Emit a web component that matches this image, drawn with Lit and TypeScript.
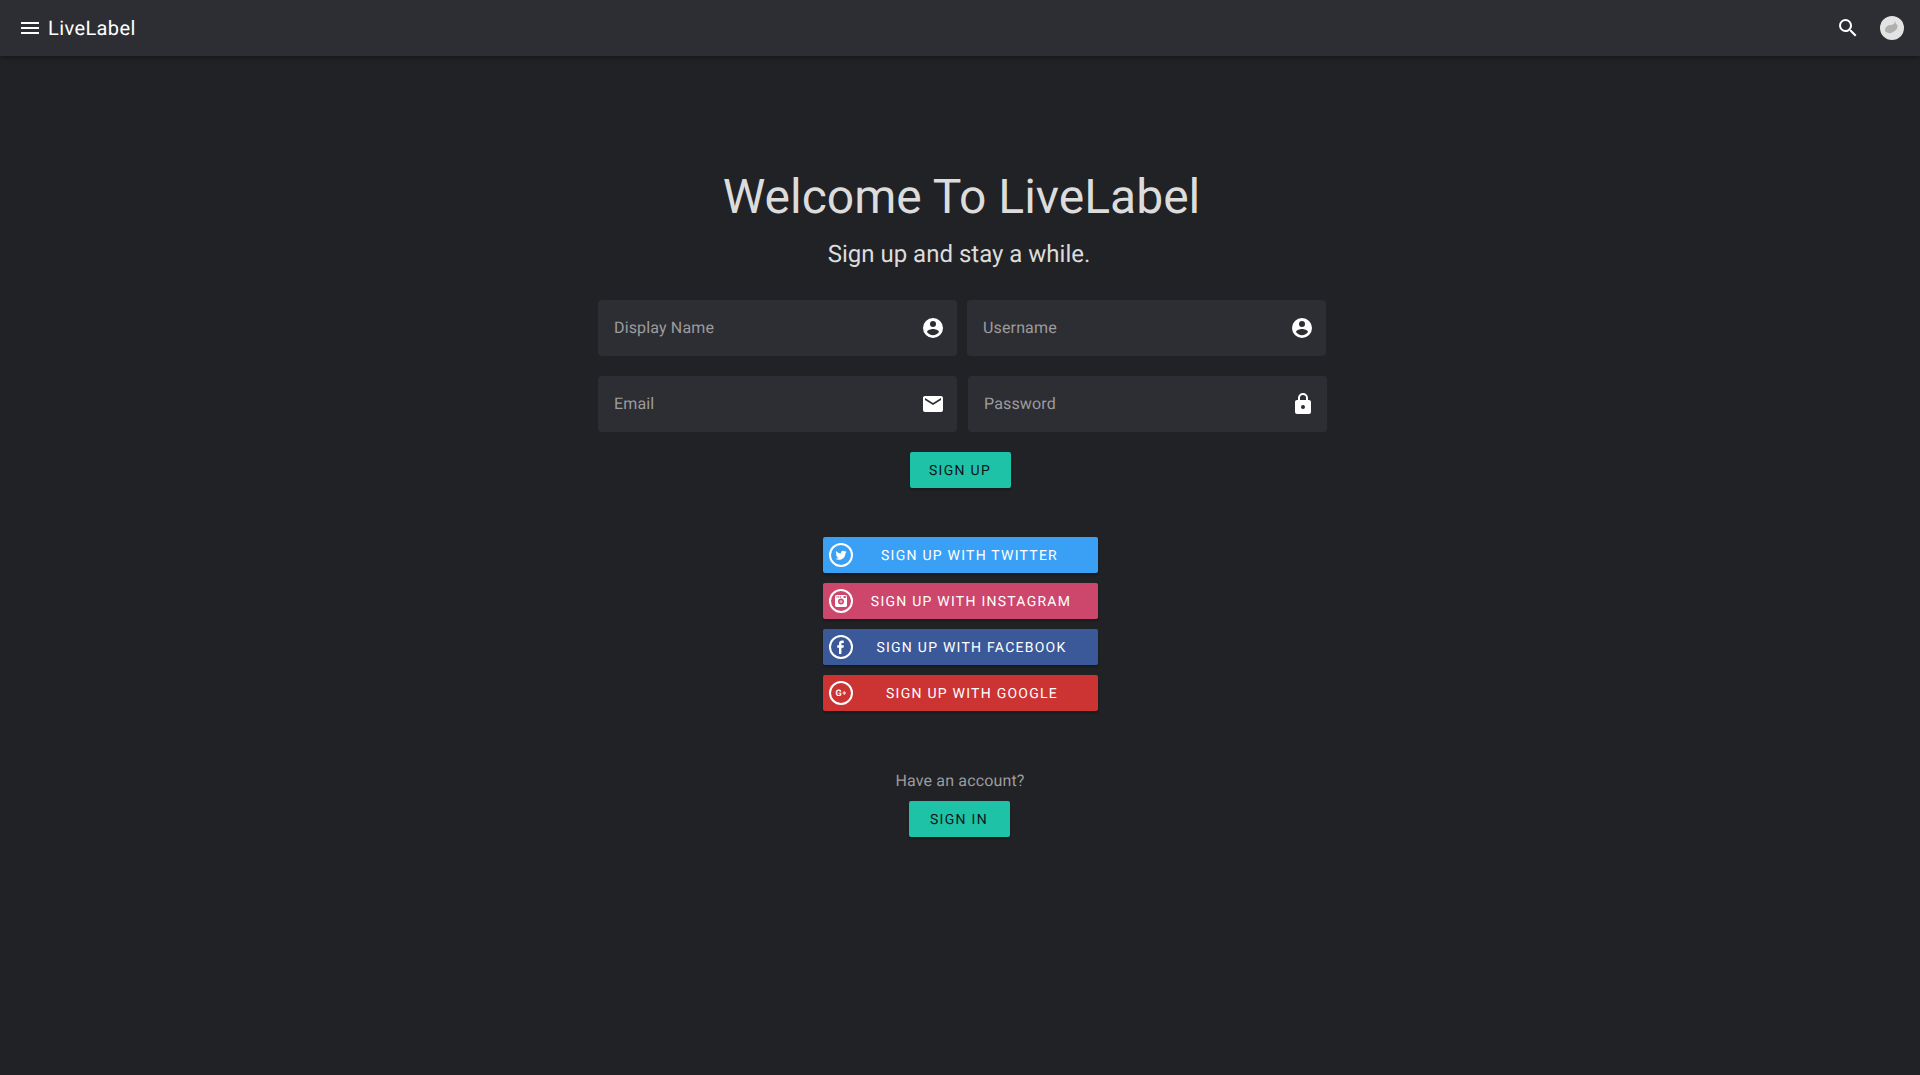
import { LitElement, css, html, svg } from "lit";
import { customElement } from "lit/decorators.js";

const ICONS = {
  menu: "M3,6H21V8H3V6M3,11H21V13H3V11M3,16H21V18H3V16Z",
  search:
    "M9.5,3A6.5,6.5 0 0,1 16,9.5C16,11.11 15.41,12.59 14.44,13.73L14.71,14H15.5L20.5,19L19,20.5L14,15.5V14.71L13.73,14.44C12.59,15.41 11.11,16 9.5,16A6.5,6.5 0 0,1 3,9.5A6.5,6.5 0 0,1 9.5,3M9.5,5C7,5 5,7 5,9.5C5,12 7,14 9.5,14C12,14 14,12 14,9.5C14,7 12,5 9.5,5Z",
  account:
    "M12,19.2C9.5,19.2 7.29,17.92 6,16C6.03,14 10,12.9 12,12.9C14,12.9 17.97,14 18,16C16.71,17.92 14.5,19.2 12,19.2M12,5A3,3 0 0,1 15,8A3,3 0 0,1 12,11A3,3 0 0,1 9,8A3,3 0 0,1 12,5M12,2A10,10 0 0,0 2,12A10,10 0 0,0 12,22A10,10 0 0,0 22,12A10,10 0 0,0 12,2Z",
  email:
    "M20,8L12,13L4,8V6L12,11L20,6M20,4H4C2.89,4 2,4.89 2,6V18A2,2 0 0,0 4,20H20A2,2 0 0,0 22,18V6C22,4.89 21.1,4 20,4Z",
  lock:
    "M12,17A2,2 0 0,0 14,15C14,13.89 13.1,13 12,13A2,2 0 0,0 10,15A2,2 0 0,0 12,17M18,8A2,2 0 0,1 20,10V20A2,2 0 0,1 18,22H6A2,2 0 0,1 4,20V10C4,8.89 4.9,8 6,8H7V6A5,5 0 0,1 12,1A5,5 0 0,1 17,6V8H18M12,3A3,3 0 0,0 9,6V8H15V6A3,3 0 0,0 12,3Z",
};

const TWITTER =
  "M22.46,6C21.69,6.35 20.86,6.58 20,6.69C20.88,6.16 21.56,5.32 21.88,4.31C21.05,4.81 20.13,5.16 19.16,5.36C18.37,4.5 17.26,4 16,4C13.65,4 11.73,5.92 11.73,8.29C11.73,8.63 11.77,8.96 11.84,9.27C8.28,9.09 5.11,7.38 3,4.79C2.63,5.42 2.42,6.16 2.42,6.94C2.42,8.43 3.17,9.75 4.33,10.5C3.62,10.5 2.96,10.3 2.38,10C2.38,10 2.38,10 2.38,10.03C2.38,12.11 3.86,13.85 5.82,14.24C5.46,14.34 5.08,14.39 4.69,14.39C4.42,14.39 4.15,14.36 3.89,14.31C4.43,16 6,17.26 7.89,17.29C6.43,18.45 4.58,19.13 2.56,19.13C2.22,19.13 1.88,19.11 1.54,19.07C3.44,20.29 5.7,21 8.12,21C16,21 20.33,14.46 20.33,8.79C20.33,8.6 20.33,8.42 20.32,8.23C21.16,7.63 21.88,6.87 22.46,6Z";

const fields = [
  { label: "Display Name", icon: ICONS.account },
  { label: "Username", icon: ICONS.account },
  { label: "Email", icon: ICONS.email },
  { label: "Password", icon: ICONS.lock },
];

// each glyph is drawn inside a 24x24 ring
const socials = [
  {
    name: "TWITTER",
    color: "#3aa0f5",
    pad: 5,
    glyph: svg`<path d=${TWITTER} fill="#fff" transform="translate(5.500 5.500) scale(0.54)" />`,
  },
  {
    name: "INSTAGRAM",
    color: "#cc476b",
    pad: 2,
    glyph: svg`
      <rect x="6" y="6" width="12" height="12" rx="1.800" fill="#fff" />
      <path d="M7.500 7h1v2h-1zM9.200 7h1v2h-1zM10.900 7h1v2h-1z" fill="#cc476b" opacity="0.7" />
      <rect x="14.600" y="7" width="2.200" height="2" fill="#cc476b" />
      <circle cx="12" cy="12.400" r="3" fill="#cc476b" />
      <circle cx="12" cy="12.400" r="1.500" fill="#e9a9ba" />`,
  },
  {
    name: "FACEBOOK",
    color: "#3b5998",
    pad: 1,
    glyph: svg`<path d="M10 19v-6.200H8.200v-2.500H10V8.700c0-2 1.200-3.100 3-3.100.9 0 1.500.1 1.800.1v2.200h-1.200c-1 0-1.200.4-1.200 1.200v1.200h2.400l-.3 2.500h-2.100V19z" fill="#fff" />`,
  },
  {
    name: "GOOGLE",
    color: "#cc3333",
    pad: 0,
    glyph: svg`
      <text x="6.500" y="15" font-family="Roboto, sans-serif" font-size="9" font-weight="700" fill="#fff">G</text>
      <path d="M13.600 11.300h3.400v1.400h-3.400zM14.600 10.300h1.400v3.400h-1.400z" fill="#fff" opacity="0.75" />`,
  },
];

@customElement("app-root")
export class AppRoot extends LitElement {
  static styles = css`
    :host {
      display: block;
      min-height: 1075px;
      background: #212226;
      font-family: Roboto, "Liberation Sans", sans-serif;
      text-rendering: geometricPrecision;
      color: #fff;
    }

    .toolbar {
      height: 56px;
      box-sizing: border-box;
      display: flex;
      align-items: center;
      padding: 0 16px 0 18px;
      background: #2d2e33;
      box-shadow: 0 2px 4px rgba(0, 0, 0, 0.3);
    }
    .toolbar svg {
      display: block;
      fill: #fff;
    }
    .menu {
      width: 24px;
      height: 24px;
    }
    .brand {
      margin-left: 6px;
      font-size: 20px;
      letter-spacing: 0.4px;
      flex: 1;
    }
    .search {
      width: 24px;
      height: 24px;
      margin-right: 20px;
    }
    .avatar {
      width: 24px;
      height: 24px;
    }

    main {
      display: flex;
      flex-direction: column;
      align-items: center;
      padding-top: 113px;
    }

    h1 {
      margin: 0 0 0 3px;
      font-size: 48px;
      line-height: 56px;
      font-weight: 400;
      color: #dcdcdc;
    }
    .sub {
      margin: 13px 2px 0 0;
      font-size: 24px;
      line-height: 32px;
      font-weight: 400;
      color: #dcdcdc;
    }

    .form {
      margin: 30px 0 0 5px;
      width: 729px;
      display: grid;
      grid-template-columns: 359px 360px;
      column-gap: 10px;
      row-gap: 20px;
    }
    .field {
      height: 56px;
      box-sizing: border-box;
      display: flex;
      align-items: center;
      justify-content: space-between;
      padding: 0 12px 0 16px;
      background: #2d2e33;
      border-radius: 4px;
      color: #9c9c9e;
      font-size: 16px;
      letter-spacing: 0.15px;
      line-height: 22px;
    }
    .field:nth-child(2) {
      margin-right: 1px;
    }
    .field:nth-child(4) {
      margin-left: 1px;
    }
    .field span {
      margin-bottom: 1px;
    }
    .field svg {
      width: 24px;
      height: 24px;
      fill: #fff;
    }

    .btn {
      height: 36px;
      box-sizing: border-box;
      display: flex;
      align-items: center;
      justify-content: center;
      padding-top: 1px;
      width: 101px;
      background: #1dc2a7;
      border-radius: 2px;
      color: #10151a;
      font-size: 14px;
      letter-spacing: 1.300px;
      box-shadow: 0 2px 2px rgba(0, 0, 0, 0.25);
    }
    .signup {
      margin-top: 20px;
    }

    .socials {
      margin-top: 49px;
      display: flex;
      flex-direction: column;
      gap: 10px;
    }
    .social {
      width: 275px;
      height: 36px;
      box-sizing: border-box;
      display: flex;
      align-items: center;
      padding: 0 8px 0 6px;
      border-radius: 2px;
      font-size: 14px;
      letter-spacing: 1.250px;
      box-shadow: 0 2px 2px rgba(0, 0, 0, 0.25);
    }
    .social svg {
      width: 24px;
      height: 24px;
      flex: none;
    }
    .social span {
      flex: 1;
      text-align: center;
      padding-top: 1px;
      padding-left: 2px;
    }

    .have {
      margin-top: 60px;
      font-size: 16px;
      letter-spacing: 0.15px;
      line-height: 20px;
      color: #9c9c9e;
    }
    .signin {
      margin: 10px 2px 0 0;
    }
  `;

  render() {
    return html`
      <header class="toolbar">
        <svg class="menu" viewBox="0 0 24 24"><path d=${ICONS.menu} /></svg>
        <div class="brand">LiveLabel</div>
        <svg class="search" viewBox="0 0 24 24"><path d=${ICONS.search} /></svg>
        <svg class="avatar" viewBox="0 0 24 24">
          <circle cx="12" cy="12" r="12" fill="#e3e3e3" />
          <path
            d="M5 14c0-3 3-5 6-5l3-1 1-3 1 3 1.500 1c.5 2.500-1 5-3.500 6.500s-3.500 2-5.500 1.500S5 16 5 14z"
            fill="#b0b0b0"
          />
        </svg>
      </header>
      <main>
        <h1>Welcome To LiveLabel</h1>
        <div class="sub">Sign up and stay a while.</div>
        <div class="form">
          ${fields.map(
            (f) => html`
              <div class="field">
                <span>${f.label}</span>
                <svg viewBox="0 0 24 24"><path d=${f.icon} /></svg>
              </div>
            `
          )}
        </div>
        <div class="btn signup">SIGN UP</div>
        <div class="socials">
          ${socials.map(
            (s) => html`
              <div class="social" style="background: ${s.color}">
                <svg viewBox="0 0 24 24">
                  <circle cx="12" cy="12" r="11" fill="none" stroke="#fff" stroke-width="2" />
                  ${s.glyph}
                </svg>
                <span style="padding-right: ${s.pad}px">SIGN UP WITH ${s.name}</span>
              </div>
            `
          )}
        </div>
        <div class="have">Have an account?</div>
        <div class="btn signin">SIGN IN</div>
      </main>
    `;
  }
}
